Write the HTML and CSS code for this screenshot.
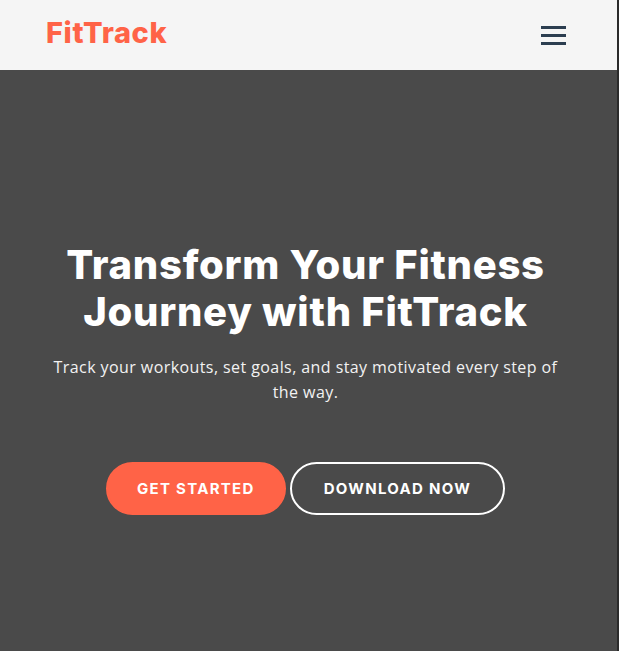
FILE: index.html
```html
<!DOCTYPE html>
<html lang="en">
<head>
<meta charset="utf-8">
<title>FitTrack</title>
<link rel="stylesheet" href="styles.css">
</head>
<body>
<div class="page">
  <header class="site-header">
    <a class="logo" href="#">FitTrack</a>
    <button class="menu-toggle" aria-label="Menu">
      <span class="bar"></span>
      <span class="bar"></span>
      <span class="bar"></span>
    </button>
  </header>
  <section class="hero">
    <h1 class="hero-title">Transform Your Fitness Journey with FitTrack</h1>
    <p class="hero-text">Track your workouts, set goals, and stay motivated every step of the way.</p>
    <div class="hero-actions">
      <a class="btn btn-primary" href="#">Get Started</a>
      <a class="btn btn-outline" href="#">Download Now</a>
    </div>
  </section>
</div>
</body>
</html>
```
FILE: styles.css
```css
* { box-sizing: border-box; }
html, body { margin: 0; padding: 0; height: 100%; }
body {
  background: #2b2b2b;
  font-family: "Open Sans", "Liberation Sans", sans-serif;
}
.page {
  margin-right: 2px;
  min-height: 100%;
  display: flex;
  flex-direction: column;
  background: #4a4a4a;
}
.site-header {
  height: 70px;
  background: #f5f5f5;
  display: flex;
  align-items: center;
  justify-content: space-between;
  padding: 0 51px 0 46px;
}
.logo {
  font-family: Inter, "Liberation Sans", sans-serif;
  font-weight: 800;
  font-size: 29px;
  line-height: 36px;
  padding-bottom: 5px;
  color: #ff6347;
  text-decoration: none;
  letter-spacing: 0.6px;
}
.menu-toggle {
  background: none;
  border: 0;
  padding: 0;
  width: 25px;
  display: flex;
  flex-direction: column;
  gap: 5px;
  cursor: pointer;
}
.bar {
  display: block;
  height: 3px;
  width: 25px;
  background: #2c3e50;
}
.hero {
  flex: 1;
  display: flex;
  flex-direction: column;
  align-items: center;
  text-align: center;
  padding: 171px 46px 40px 40px;
  color: #fff;
}
.hero-title {
  margin: 0;
  font-family: Inter, "Liberation Sans", sans-serif;
  font-weight: 800;
  font-size: 40px;
  line-height: 47px;
  letter-spacing: 0.75px;
  max-width: 530px;
}
.hero-text {
  margin: 20px 0 0;
  font-size: 16px;
  line-height: 25px;
  letter-spacing: 0.42px;
  max-width: 515px;
  color: #f2f2f2;
}
.hero-actions {
  margin-top: 57px;
  display: flex;
  gap: 4px;
}
.btn {
  display: inline-block;
  font-family: Inter, "Liberation Sans", sans-serif;
  font-weight: 700;
  font-size: 15px;
  letter-spacing: 1.3px;
  text-transform: uppercase;
  text-decoration: none;
  color: #fff;
  border-radius: 30px;
  padding: 14px 30px;
  line-height: 21px;
  border: 2px solid transparent;
}
.btn-primary { background: #ff6347; border-color: #ff6347; padding: 14px 29px; }
.btn-outline { border-color: #fff; padding: 14px 32px; }
```
